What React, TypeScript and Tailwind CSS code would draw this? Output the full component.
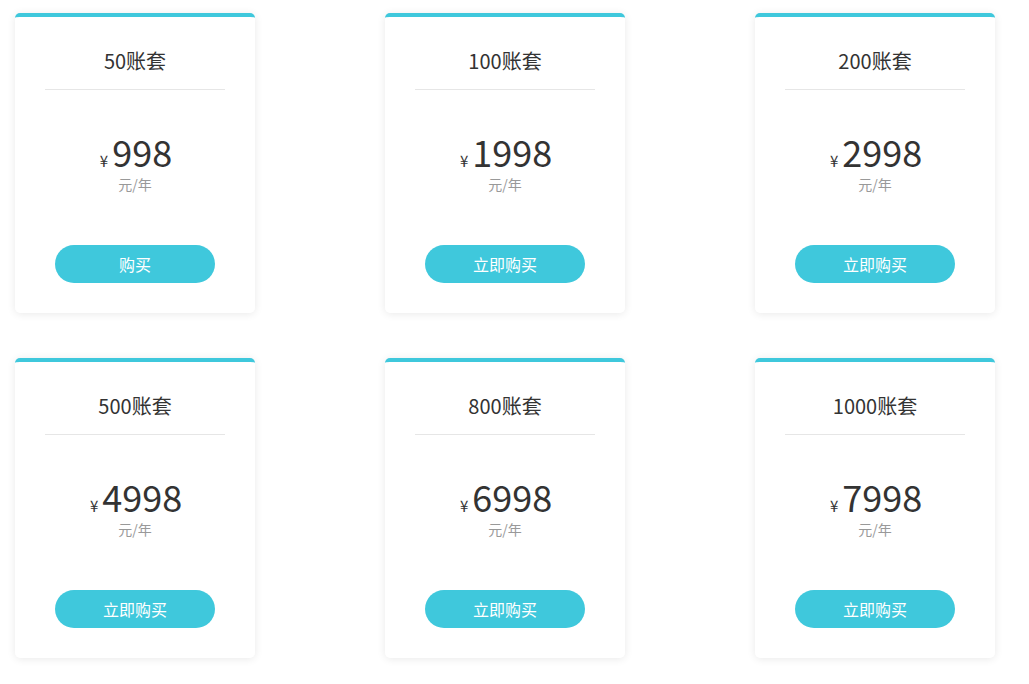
import React from "react";

const plans = [
  { name: "50账套", price: "998", btn: "购买" },
  { name: "100账套", price: "1998", btn: "立即购买" },
  { name: "200账套", price: "2998", btn: "立即购买" },
  { name: "500账套", price: "4998", btn: "立即购买" },
  { name: "800账套", price: "6998", btn: "立即购买" },
  { name: "1000账套", price: "7998", btn: "立即购买" },
];

export default function App() {
  return (
    <div
      className="min-h-[684px] w-[1029px] bg-white pl-[15px] pt-[13px]"
      style={{ fontFamily: '"Noto Sans CJK SC", "Open Sans", sans-serif' }}
    >
      <div className="grid grid-cols-[240px_240px_240px] gap-x-[130px] gap-y-[45px]">
        {plans.map((p) => (
          <div
            key={p.name}
            className="flex h-[300px] flex-col items-center rounded-[5px] border-t-4 border-[#3fc8dc] bg-white shadow-[0_1px_8px_rgba(0,0,0,0.09)]"
          >
            <div className="mt-[31px] h-[26px] text-[20px] leading-[26px] text-[#333]">{p.name}</div>
            <div className="mt-[15px] h-px w-[180px] bg-[#e6e6e6]" />
            <div className="mt-[43px] flex h-[36px] items-baseline pl-[2px] text-[#333]">
              <span className="mr-[4px] text-[15px] leading-[36px]">¥</span>
              <span className="text-[36px] leading-[36px]">{p.price}</span>
            </div>
            <div className="mt-[6px] text-[14px] leading-[18px] text-[#999]">元/年</div>
            <button className="mt-auto mb-[30px] h-[38px] w-[160px] rounded-full bg-[#3fc8dc] text-[16px] text-white">
              {p.btn}
            </button>
          </div>
        ))}
      </div>
    </div>
  );
}
